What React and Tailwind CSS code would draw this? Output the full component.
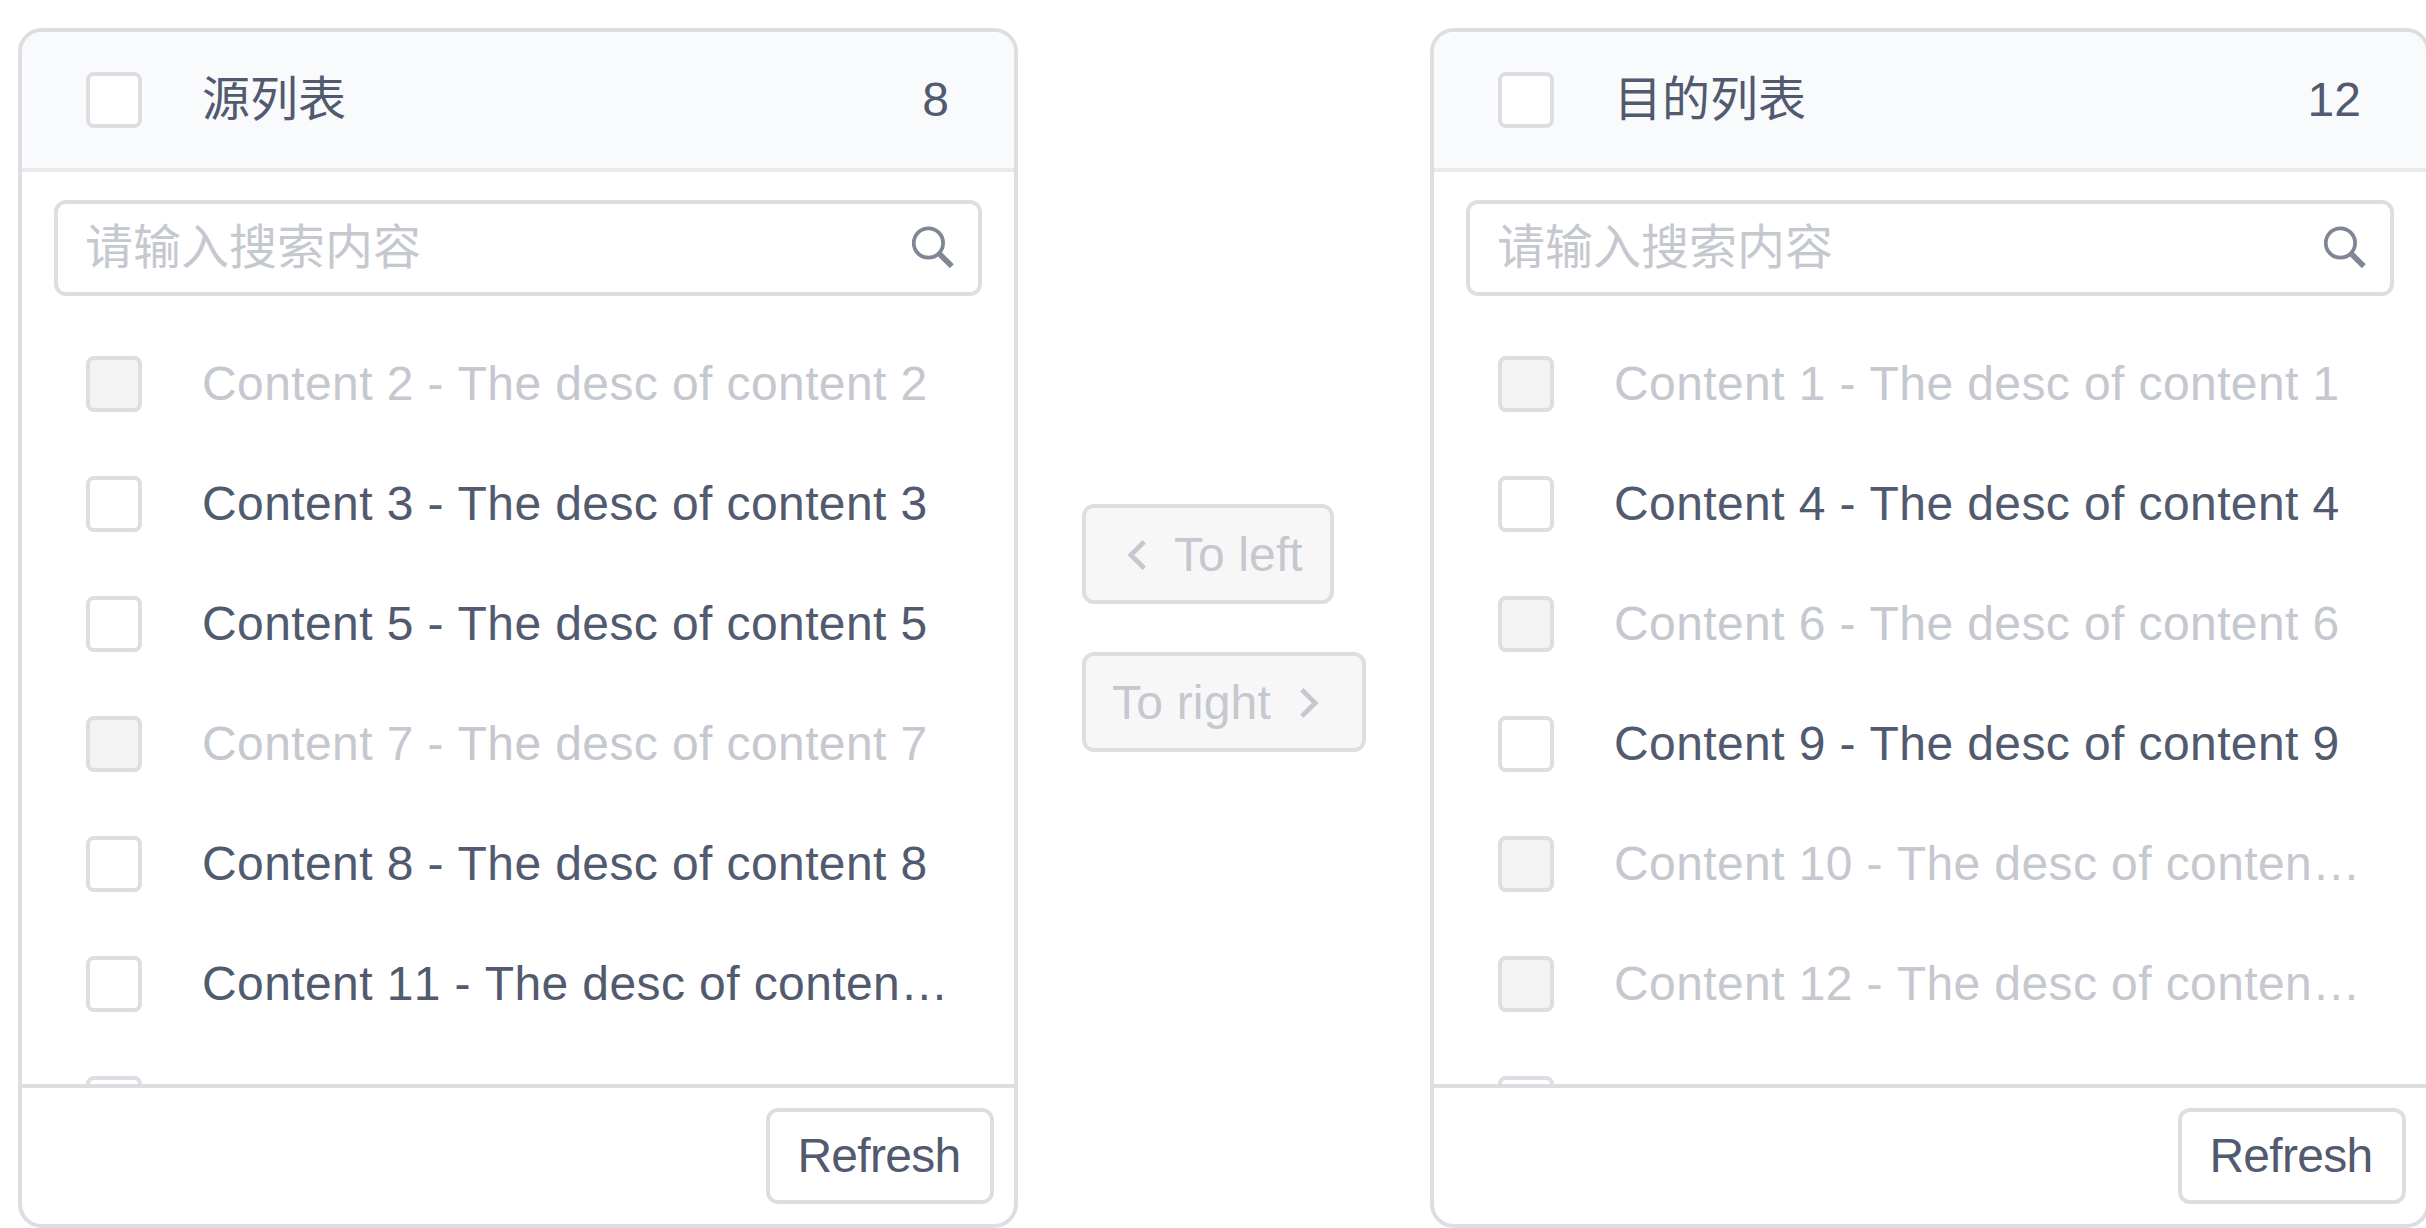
const SANS = "font-['Liberation_Sans','Noto_Sans_CJK_SC',sans-serif]";

const source = {
  title: '源列表',
  count: 8,
  items: [
    { label: 'Content 2 - The desc of content 2', disabled: true },
    { label: 'Content 3 - The desc of content 3' },
    { label: 'Content 5 - The desc of content 5' },
    { label: 'Content 7 - The desc of content 7', disabled: true },
    { label: 'Content 8 - The desc of content 8' },
    { label: 'Content 11 - The desc of conten…' },
    { label: '' },
  ],
};

const target = {
  title: '目的列表',
  count: 12,
  items: [
    { label: 'Content 1 - The desc of content 1', disabled: true },
    { label: 'Content 4 - The desc of content 4' },
    { label: 'Content 6 - The desc of content 6', disabled: true },
    { label: 'Content 9 - The desc of content 9' },
    { label: 'Content 10 - The desc of conten…', disabled: true },
    { label: 'Content 12 - The desc of conten…', disabled: true },
    { label: '' },
  ],
};

function Checkbox({ disabled }) {
  return (
    <span
      className={`size-14 shrink-0 rounded-lg border-4 border-[#dcdee2] ${disabled ? 'bg-[#f3f3f3]' : 'bg-white'}`}
    />
  );
}

function SearchIcon() {
  return (
    <svg className="mb-[3px] h-[42px] w-[42px] shrink-0" viewBox="0 0 42 42" fill="none" stroke="#808695">
      <circle cx="16.4" cy="17" r="14.7" strokeWidth="3.8" />
      <path d="M27 27.5 L39.8 40.2" strokeWidth="5.6" />
    </svg>
  );
}

function Chevron({ right }) {
  return (
    <svg className="h-[30px] w-[19px] shrink-0" viewBox="0 0 19 30" fill="none" stroke="#c5c8ce" strokeWidth="4.8">
      <path d={right ? 'M1.8 1.8 L15.2 15 L1.8 28.2' : 'M17.2 1.8 L3.8 15 L17.2 28.2'} />
    </svg>
  );
}

function Panel({ title, count, items }) {
  return (
    <section className="flex h-[1200px] w-[1000px] shrink-0 flex-col overflow-hidden rounded-3xl border-4 border-[#dcdee2] bg-white">
      <header className="flex h-[140px] shrink-0 items-center border-b-4 border-[#e8eaec] bg-[#f9fafc] px-16">
        <Checkbox />
        <span className="ml-[60px] leading-[72px]">{title}</span>
        <span className="mr-px ml-auto">{count}</span>
      </header>
      <div className="mx-8 mt-7 flex h-24 shrink-0 items-center justify-between rounded-xl border-4 border-[#dcdee2] pr-6 pl-[27px] text-[#c5c8ce]">
        <span>请输入搜索内容</span>
        <SearchIcon />
      </div>
      <ul className="mt-7 min-h-0 flex-1 overflow-hidden">
        {items.map(({ label, disabled }, index) => (
          <li key={index} className={`flex h-[120px] items-center pl-16 ${disabled ? 'text-[#c5c8ce]' : ''}`}>
            <Checkbox disabled={disabled} />
            <span className="ml-[60px] tracking-[0.4px] [font-kerning:none]">{label}</span>
          </li>
        ))}
      </ul>
      <footer className="flex h-[140px] shrink-0 items-start justify-end border-t-4 border-[#dcdee2] px-5 pt-5">
        <button className="h-24 w-[228px] rounded-xl border-4 border-[#dcdee2] bg-white pr-0.5 tracking-[-0.7px]">
          Refresh
        </button>
      </footer>
    </section>
  );
}

export default function App() {
  return (
    <main
      className={`${SANS} flex h-[1228px] w-[2426px] items-start overflow-hidden bg-white pt-7 pl-[18px] text-5xl leading-[72px] whitespace-nowrap text-[#515a6e]`}
    >
      <Panel {...source} />
      <div className="mx-16 mt-[476px] flex w-[284px] shrink-0 flex-col items-start gap-12 text-[#c5c8ce]">
        <button className="flex h-[100px] w-[252px] items-center rounded-xl border-4 border-[#dcdee2] bg-[#f7f7f7] pt-0.5 pl-[41px]">
          <Chevron />
          <span className="ml-7 tracking-[0.1px]">To left</span>
        </button>
        <button className="flex h-[100px] w-[284px] items-center rounded-xl border-4 border-[#dcdee2] bg-[#f7f7f7] pt-0.5 pl-[26px]">
          <span className="mr-[29px] tracking-[0.2px]">To right</span>
          <Chevron right />
        </button>
      </div>
      <Panel {...target} />
    </main>
  );
}
